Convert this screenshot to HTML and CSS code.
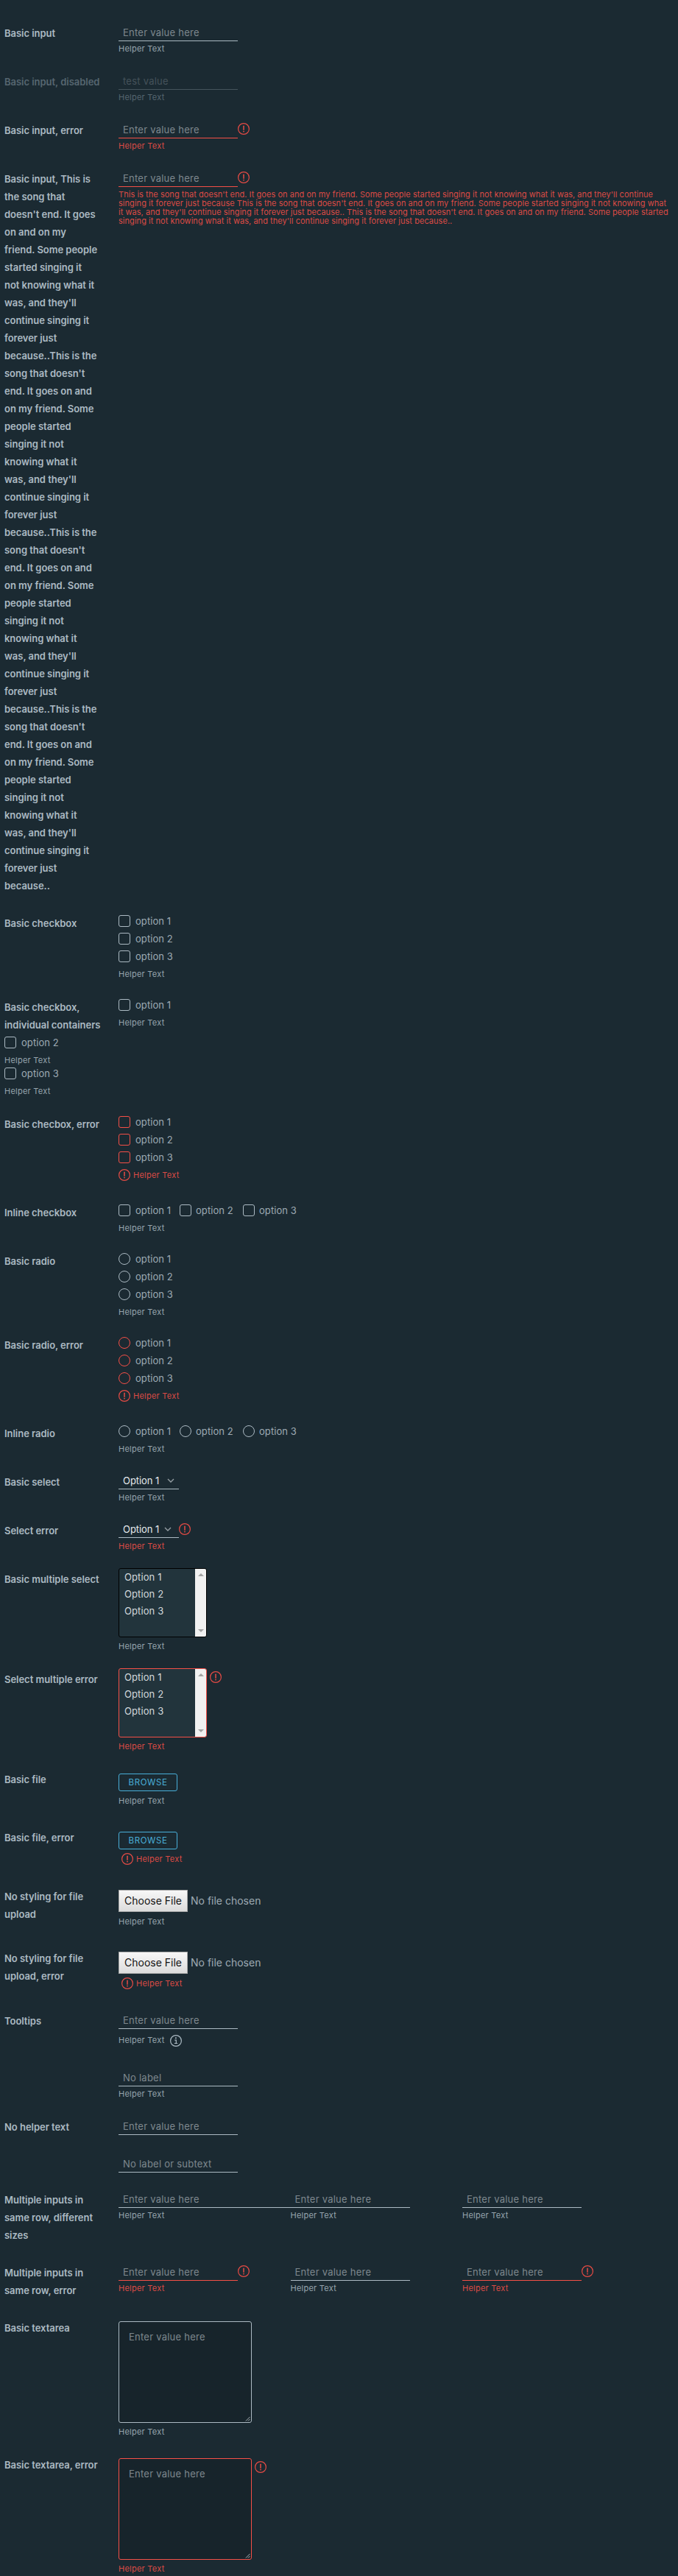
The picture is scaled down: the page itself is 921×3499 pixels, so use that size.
FILE: index.html
```
<!DOCTYPE html>
<html lang="en">
<head>
<meta charset="utf-8">
<title>Form layouts</title>
<link rel="stylesheet" href="styles.css">
</head>
<body>
<svg class="defs" width="0" height="0">
<symbol id="err" viewBox="0 0 16 16"><circle cx="8" cy="8" r="7.4" fill="none" stroke="currentColor" stroke-width="1.2"/><path d="M8 4.2v5" stroke="currentColor" stroke-width="1.5" stroke-linecap="round"/><circle cx="8" cy="11.6" r=".95" fill="currentColor"/></symbol>
<symbol id="info" viewBox="0 0 16 16"><circle cx="8" cy="8" r="7.4" fill="none" stroke="currentColor" stroke-width="1.2"/><circle cx="7.9" cy="4.3" r="1" fill="currentColor"/><path d="M6.3 7.1h2v4.3M5.9 11.5h4.3" fill="none" stroke="currentColor" stroke-width="1.2"/></symbol>
<symbol id="chev" viewBox="0 0 10 6"><path d="M1 1l4 4 4-4" fill="none" stroke="currentColor" stroke-width="1.3"/></symbol>
</svg>
<main class="form">
<div class="row"><div class="label">Basic input</div><div class="field"><div class="line"><span class="input">Enter value here</span></div><div class="help">Helper Text</div></div></div>
<div class="row disabled"><div class="label">Basic input, disabled</div><div class="field"><div class="line"><span class="input">test value</span></div><div class="help">Helper Text</div></div></div>
<div class="row error"><div class="label">Basic input, error</div><div class="field"><div class="line"><span class="input">Enter value here</span><svg class="icon"><use href="#err"/></svg></div><div class="help">Helper Text</div></div></div>
<div class="row error long"><div class="label">Basic input, This is<br>the song that<br>doesn't end. It goes<br>on and on my<br>friend. Some people<br>started singing it<br>not knowing what it<br>was, and they'll<br>continue singing it<br>forever just<br>because..This is the<br>song that doesn't<br>end. It goes on and<br>on my friend. Some<br>people started<br>singing it not<br>knowing what it<br>was, and they'll<br>continue singing it<br>forever just<br>because..This is the<br>song that doesn't<br>end. It goes on and<br>on my friend. Some<br>people started<br>singing it not<br>knowing what it<br>was, and they'll<br>continue singing it<br>forever just<br>because..This is the<br>song that doesn't<br>end. It goes on and<br>on my friend. Some<br>people started<br>singing it not<br>knowing what it<br>was, and they'll<br>continue singing it<br>forever just<br>because..</div><div class="field"><div class="line"><span class="input">Enter value here</span><svg class="icon"><use href="#err"/></svg></div><div class="help prose">This is the song that doesn't end. It goes on and on my friend. Some people started singing it not knowing what it was, and they'll continue<br>singing it forever just because This is the song that doesn't end. It goes on and on my friend. Some people started singing it not knowing what<br>it was, and they'll continue singing it forever just because.. This is the song that doesn't end. It goes on and on my friend. Some people started<br>singing it not knowing what it was, and they'll continue singing it forever just because..</div></div></div>

<div class="row h114"><div class="label">Basic checkbox</div><div class="field opts"><div class="opt"><i class="box"></i>option 1</div><div class="opt"><i class="box"></i>option 2</div><div class="opt"><i class="box"></i>option 3</div><div class="help">Helper Text</div></div></div>
<div class="row h159"><div class="label">Basic checkbox,<br>individual containers<div class="below"><div class="opt"><i class="box"></i>option 2</div><div class="help">Helper Text</div><div class="opt"><i class="box"></i>option 3</div><div class="help">Helper Text</div></div></div><div class="field opts"><div class="opt"><i class="box"></i>option 1</div><div class="help">Helper Text</div></div></div>
<div class="row h120 error"><div class="label">Basic checbox, error</div><div class="field opts"><div class="opt"><i class="box"></i>option 1</div><div class="opt"><i class="box"></i>option 2</div><div class="opt"><i class="box"></i>option 3</div><div class="help"><svg class="icon"><use href="#err"/></svg>Helper Text</div></div></div>
<div class="row"><div class="label">Inline checkbox</div><div class="field opts"><div class="inline"><div class="opt"><i class="box"></i>option 1</div><div class="opt"><i class="box"></i>option 2</div><div class="opt"><i class="box"></i>option 3</div></div><div class="help">Helper Text</div></div></div>
<div class="row h114"><div class="label">Basic radio</div><div class="field opts"><div class="opt"><i class="box dot"></i>option 1</div><div class="opt"><i class="box dot"></i>option 2</div><div class="opt"><i class="box dot"></i>option 3</div><div class="help">Helper Text</div></div></div>
<div class="row h120 error"><div class="label">Basic radio, error</div><div class="field opts"><div class="opt"><i class="box dot"></i>option 1</div><div class="opt"><i class="box dot"></i>option 2</div><div class="opt"><i class="box dot"></i>option 3</div><div class="help"><svg class="icon"><use href="#err"/></svg>Helper Text</div></div></div>
<div class="row"><div class="label">Inline radio</div><div class="field opts"><div class="inline"><div class="opt"><i class="box dot"></i>option 1</div><div class="opt"><i class="box dot"></i>option 2</div><div class="opt"><i class="box dot"></i>option 3</div></div><div class="help">Helper Text</div></div></div>

<div class="row"><div class="label">Basic select</div><div class="field"><div class="line"><span class="select">Option 1<svg class="chev"><use href="#chev"/></svg></span></div><div class="help after-select">Helper Text</div></div></div>
<div class="row error"><div class="label">Select error</div><div class="field"><div class="line"><span class="select tight">Option 1<svg class="chev"><use href="#chev"/></svg></span><svg class="icon"><use href="#err"/></svg></div><div class="help after-select">Helper Text</div></div></div>
<div class="row h136"><div class="label">Basic multiple select</div><div class="field multi"><div class="line"><div class="list"><div class="items"><span>Option 1</span><span>Option 2</span><span>Option 3</span></div><div class="bar"><i class="up"></i><i class="down"></i></div></div></div><div class="help">Helper Text</div></div></div>
<div class="row h136 error"><div class="label">Select multiple error</div><div class="field multi"><div class="line"><div class="list"><div class="items"><span>Option 1</span><span>Option 2</span><span>Option 3</span></div><div class="bar"><i class="up"></i><i class="down"></i></div></div><svg class="icon"><use href="#err"/></svg></div><div class="help">Helper Text</div></div></div>

<div class="row h79"><div class="label">Basic file</div><div class="field file"><span class="browse">BROWSE</span><div class="help">Helper Text</div></div></div>
<div class="row h80 error"><div class="label">Basic file, error</div><div class="field file"><span class="browse">BROWSE</span><div class="help inset"><svg class="icon"><use href="#err"/></svg>Helper Text</div></div></div>
<div class="row h84"><div class="label">No styling for file<br>upload</div><div class="field native"><div class="line"><span class="choose">Choose File</span><span class="none">No file chosen</span></div><div class="help">Helper Text</div></div></div>
<div class="row h85 error"><div class="label">No styling for file<br>upload, error</div><div class="field native"><div class="line"><span class="choose">Choose File</span><span class="none">No file chosen</span></div><div class="help inset"><svg class="icon"><use href="#err"/></svg>Helper Text</div></div></div>

<div class="row h78"><div class="label">Tooltips</div><div class="field"><div class="line"><span class="input">Enter value here</span></div><div class="help tip">Helper Text<svg class="icon"><use href="#info"/></svg></div></div></div>
<div class="row"><div class="label"></div><div class="field"><div class="line"><span class="input">No label</span></div><div class="help">Helper Text</div></div></div>
<div class="row h51"><div class="label">No helper text</div><div class="field"><div class="line"><span class="input">Enter value here</span></div></div></div>
<div class="row h48"><div class="label"></div><div class="field"><div class="line"><span class="input">No label or subtext</span></div></div></div>
<div class="row h99"><div class="label">Multiple inputs in<br>same row, different<br>sizes</div><div class="field cols">
<div><span class="input wide">Enter value here</span><div class="help">Helper Text</div></div>
<div><span class="input">Enter value here</span><div class="help">Helper Text</div></div>
<div><span class="input">Enter value here</span><div class="help">Helper Text</div></div></div></div>
<div class="row h75"><div class="label">Multiple inputs in<br>same row, error</div><div class="field cols">
<div class="error"><div class="line"><span class="input">Enter value here</span><svg class="icon"><use href="#err"/></svg></div><div class="help">Helper Text</div></div>
<div><span class="input">Enter value here</span><div class="help">Helper Text</div></div>
<div class="error"><div class="line"><span class="input">Enter value here</span><svg class="icon"><use href="#err"/></svg></div><div class="help">Helper Text</div></div></div></div>
<div class="row h186"><div class="label">Basic textarea</div><div class="field area"><div class="line"><div class="text">Enter value here<svg class="grip" viewBox="0 0 8 8"><path d="M1 7.5L7.5 1M4.5 7.5l3-3" stroke="currentColor"/></svg></div></div><div class="help">Helper Text</div></div></div>
<div class="row last error"><div class="label">Basic textarea, error</div><div class="field area"><div class="line"><div class="text">Enter value here<svg class="grip" viewBox="0 0 8 8"><path d="M1 7.5L7.5 1M4.5 7.5l3-3" stroke="currentColor"/></svg></div><svg class="icon"><use href="#err"/></svg></div><div class="help">Helper Text</div></div></div>
</main>
</body>
</html>
```
FILE: styles.css
```
* { box-sizing: border-box; }
body { margin: 0; background: #1b2a32; color: #acbac3; font: 13px/24px Inter, "Open Sans", sans-serif; }
.defs { display: none; }
.form { padding: 33px 0 0 6px; height: 3499px; overflow: hidden; }
.row { display: flex; height: 66px; white-space: nowrap; }
.label { width: 155px; flex: none; font-weight: 600; letter-spacing: -.03px; }
.field { flex: 1; }
.line { display: flex; align-items: flex-start; }
.icon { width: 16px; height: 16px; flex: none; color: #e64b45; }
.line > .icon { margin-top: 2px; }

.input { display: block; width: 162px; height: 23px; padding-left: 6px; line-height: 22px; border-bottom: 1px solid #acbac3; color: #7e888e; letter-spacing: .24px; }
.input.wide { width: 240px; }
.error .input { border-color: #f54f47; }
.help { display: flex; align-items: center; height: 12px; margin-top: 4px; font-size: 11px; font-weight: 400; line-height: 12px; letter-spacing: .24px; color: #97a5ae; }
.help .icon { margin-right: 4px; }
.error .help { color: #dc4a45; }
.help.prose { display: block; height: auto; letter-spacing: .045px; }
.help.inset { padding-left: 4px; }
.help.tip { margin-top: 9px; }
.help.tip .icon { margin: 1px 0 0 7px; color: #acbac3; }
.disabled .label, .disabled .help { color: #566670; }
.disabled .input { color: #45525a; border-color: #45545c; }

.opts { margin-top: -3px; }
.opt { display: flex; align-items: center; gap: 7px; height: 24px; font-weight: 400; letter-spacing: .08px; color: #9eabb4; }
.box { width: 16px; height: 16px; border: 1px solid #acbac3; border-radius: 3px; }
.box.dot { border-radius: 50%; }
.error .box { border-color: #f54f47; }
.opts .help, .below .help { margin-top: 6px; }
.inline { display: flex; }
.inline .opt { width: 86px; gap: 6px; }
.inline .opt:first-child { width: 83px; gap: 7px; }

.select { display: flex; align-items: center; width: 82px; height: 22px; padding: 0 6px 1px 6px; justify-content: space-between; border-bottom: 1px solid #acbac3; color: #e4e9ec; letter-spacing: -.05px; }
.select.tight { padding-right: 10px; }
.chev { width: 10px; height: 6px; color: #97a0a5; }
.help.after-select { margin-top: 5px; }
.multi { margin-top: -3px; }
.list { display: flex; width: 120px; height: 94px; border: 1px solid #000; border-radius: 3px; background: #22343c; color: #d3d9dc; overflow: hidden; letter-spacing: .1px; }
.error .list { border-color: #f54f47; }
.items { flex: 1; display: flex; flex-direction: column; padding-left: 7px; line-height: 23px; }
.bar { width: 15px; background: #f1f1f1; display: flex; flex-direction: column; justify-content: space-between; align-items: center; padding: 6px 0; }
.up, .down { border: 4px solid transparent; }
.up { border-top: 0; border-bottom-color: #a3a3a3; }
.down { border-bottom: 0; border-top-color: #a3a3a3; }
.multi .icon { margin: 4px 0 0 4px; }
.multi .help { margin-top: 6px; }

.file { padding-top: 4px; }
.browse { display: block; width: 80px; height: 24px; border: 1px solid #49afd9; border-radius: 3px; color: #49afd9; font-size: 11.5px; line-height: 22px; text-align: center; letter-spacing: .6px; }
.file .help, .native .help { margin-top: 7px; }
.native { padding-top: 3px; font-size: 14px; }
.choose { width: 94px; height: 30px; border: 1px solid #a9a9a9; background: linear-gradient(#f7f7f7, #dcdcdc); color: #111; line-height: 28px; text-align: center; }
.none { margin-left: 4px; line-height: 30px; color: #9eabb4; }

.cols { display: flex; }
.cols > div { width: 233.5px; }
.area { padding-top: 3px; }
.text { position: relative; width: 181px; height: 138px; padding: 8px 13px; border: 1px solid #acbac3; border-radius: 3px; background: #17242b; color: #7e888e; letter-spacing: .24px; }
.error .text { border-color: #f54f47; }
.grip { position: absolute; right: 1px; bottom: 1px; width: 7px; height: 7px; color: #c0c8cc; }
.area .icon { margin: 4px 0 0 4px; }
.area .help { margin-top: 6px; }
.h48 { height: 48px; } .h51 { height: 51px; } .h75 { height: 75px; } .h78 { height: 78px; }
.h79 { height: 79px; } .h80 { height: 80px; } .h84 { height: 84px; } .h85 { height: 85px; }
.h99 { height: 99px; } .h114 { height: 114px; } .h120 { height: 120px; } .h136 { height: 136px; }
.h159 { height: 159px; } .h186 { height: 186px; } .long { height: 1011px; } .last { height: 151px; }
```
